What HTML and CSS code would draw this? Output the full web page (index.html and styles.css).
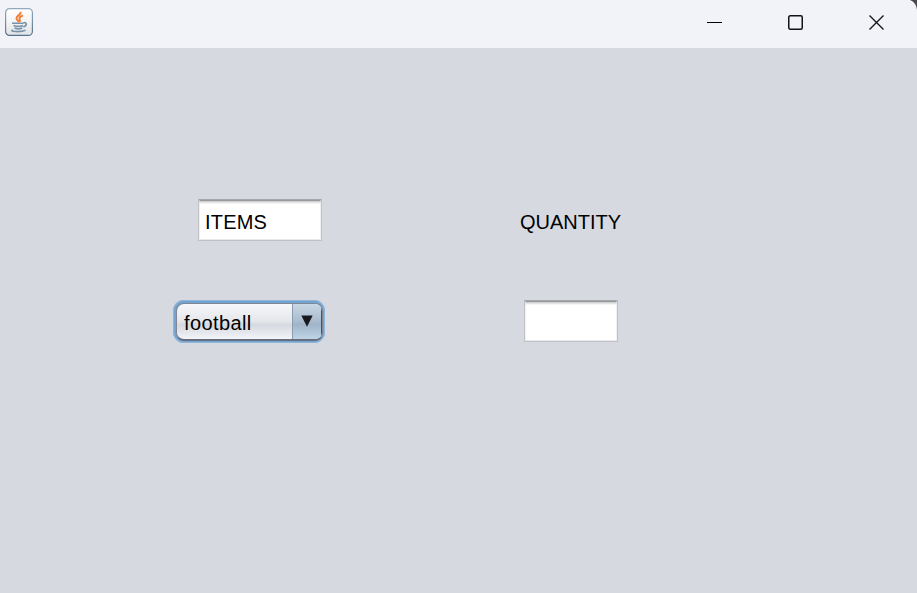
FILE: index.html
```html
<!DOCTYPE html>
<html lang="en">
<head>
<meta charset="utf-8">
<title>Items</title>
<link rel="stylesheet" href="styles.css">
</head>
<body>
<div class="window">
  <header class="titlebar">
    <svg class="app-icon" width="28" height="28" viewBox="0 0 28 28" fill="none">
      <defs>
        <linearGradient id="tile" x1="0" y1="0" x2="0" y2="1"><stop offset="0" stop-color="#fff"/><stop offset=".5" stop-color="#f3f4f5"/><stop offset="1" stop-color="#dfe3e7"/></linearGradient>
        <linearGradient id="rim" x1="0" y1="0" x2="0" y2="1"><stop offset="0" stop-color="#93aabd"/><stop offset="1" stop-color="#58738b"/></linearGradient>
      </defs>
      <rect x=".6" y=".6" width="26.8" height="26.8" rx="4" fill="url(#tile)" stroke="url(#rim)" stroke-width="1.2"/>
      <path d="M15.500 3.800c1.200 3.200-4.500 3.700-4 6.500 .2 1.400 1.600 2.200 2.400 3.900M18 7.500c-3 1.100-4.300 2.300-3.300 3.800 .6.900.3 1.700-.3 2.600" stroke="#ee8039" stroke-width="2"/>
      <path d="M7 15.300h11.500M8.500 17.500c2.800 1 7 1 9.500 0M9.500 20.100c2.300 1 5.500 1 7.800 0M18.500 14.800c4-1 3.500 3-.3 4M8 22c-5 1.800 8.500 2.300 12.500.3" stroke="#7892aa" stroke-width="1.600"/>
    </svg>
    <div class="controls">
      <svg width="16" height="16" viewBox="0 0 16 16"><path d="M1 8.500h15" stroke="#000"/></svg>
      <svg width="16" height="16" viewBox="0 0 16 16"><rect x="1.750" y="1.750" width="13.500" height="13.500" rx="1.500" fill="none" stroke="#111315" stroke-width="1.500"/></svg>
      <svg width="16" height="16" viewBox="0 0 16 16"><path d="M1.500 1.500l14 14M15.500 1.500l-14 14" stroke="#15171a" stroke-width="1.400"/></svg>
    </div>
    <svg class="corner" width="7" height="10" viewBox="0 0 7 10"><path d="M0 0h7v10C6.500 5 4 1.500 0 0z" fill="#4b4b4d"/></svg>
  </header>
  <main class="form">
    <div class="field items">ITEMS</div>
    <div class="label">QUANTITY</div>
    <div class="combo">
      <div class="combo-body">
        <span class="combo-value">football</span>
        <span class="combo-button"><svg width="12" height="12" viewBox="0 0 12 12"><path d="M.3.500h11.400L6 11.800z" fill="#17191c"/></svg></span>
      </div>
    </div>
    <div class="field quantity"></div>
  </main>
</div>
</body>
</html>
```
FILE: styles.css
```css
* { box-sizing: border-box; }
body { margin: 0; background: #d6d9e0; color: #000; font: 20px/24px "Liberation Sans", Arial, sans-serif; }
.window { height: 593px; overflow: hidden; }
.titlebar { position: relative; display: flex; justify-content: space-between; height: 48px; padding: 8px 33px 0 5px; background: #f1f3f8; }
.controls { display: flex; gap: 65px; padding-top: 6px; }
.titlebar svg { display: block; }
.corner { position: absolute; top: 0; right: 0; }
.form { display: grid; grid-template-columns: 152px 102px; grid-template-rows: 42px 43px; column-gap: 194px; row-gap: 59px; padding: 151px 0 0 173px; }
.field {
  height: 42px;
  border: 1px solid #bfc1c5;
  border-top-color: #a4a6aa;
  background: linear-gradient(#98999c 0 1px, #cfd0d2 1px 2px, #e4e4e5 2px 3px, #f5f5f5 3px 4px, #fff 4px);
  box-shadow: inset 1px 0 #e5e6e880, inset -1px 0 #e5e6e880, inset 0 -1px #e9eaec;
}
.items { width: 124px; margin-left: 25px; padding: 10px 0 0 6px; letter-spacing: .2px; }
.quantity { width: 94px; margin-left: 5px; }
.label { padding-top: 11px; padding-left: 1px; }
.combo { height: 43px; padding: 3px 2px 2px 3px; border-radius: 11px; background: #73a4d1; box-shadow: inset 0 0 0 1px #8fb5d9; }
.combo-body { display: flex; height: 38px; border: 1px solid #7e8795; border-bottom: 2px solid #66707e; border-radius: 8px; overflow: hidden; background: linear-gradient(#f7f8fa, #e5e7eb 48%, #d6d9df 60%, #f2f4f8); }
.combo-value { flex: 1; padding: 7px 0 0 7px; letter-spacing: .4px; }
.combo-button { display: flex; justify-content: center; width: 30px; padding-top: 11px; border-left: 1px solid #8a9caf; border-right: 1px solid #3c5368; background: linear-gradient(#c9d7e4, #a9bccf 50%, #9fb4c9 58%, #c0d4e6); }
```
